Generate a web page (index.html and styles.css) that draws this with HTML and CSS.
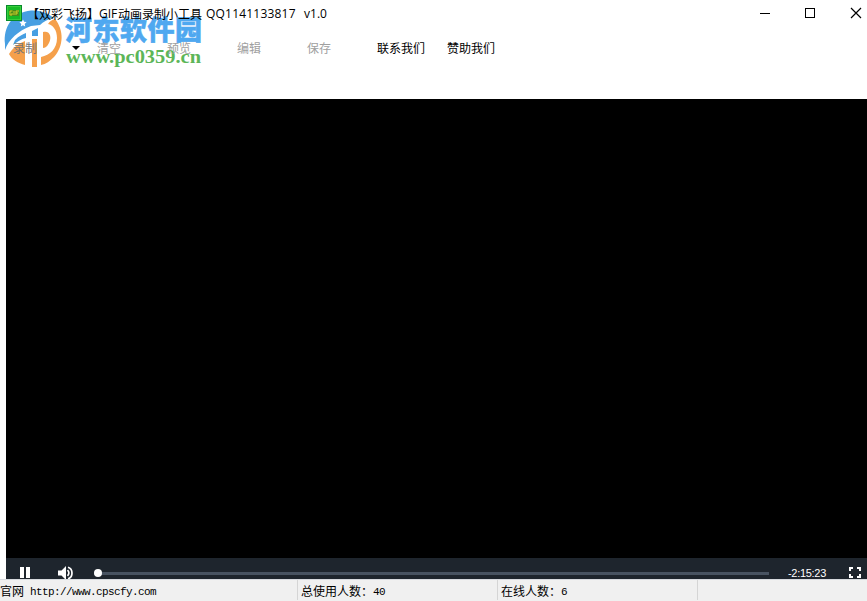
FILE: index.html
```
<!DOCTYPE html>
<html lang="zh-CN">
<head>
  <meta charset="UTF-8" />
  <title>GIF动画录制小工具</title>
  <link rel="stylesheet" href="styles.css">
</head>
<body>
  <div class="window">
    <div class="titlebar">
      <svg class="app-icon" width="16" height="16" viewBox="0 0 16 16">
        <rect width="16" height="16" fill="#078a2b"/>
        <rect x="1.5" y="1.5" width="13" height="13" fill="#18bb27" stroke="#39ce3c"/>
        <rect x="3" y="5" width="10" height="6" fill="#498b1b"/>
        <path d="M6.500 6H4v4h2V8M8 6v4M10 10V6h3M10 8h2" fill="none" stroke="#ddd52a" stroke-width=".9"/>
      </svg>
      <div class="title"><span>【双彩飞扬】</span><span class="gif">GIF</span><span>动画录制小工具</span><span class="qq">QQ1141133817</span><span class="version">v1.0</span></div>
      <svg class="controls" width="127" height="28" viewBox="0 0 127 28" fill="none" stroke="#000">
        <path d="M20 13.5h10"/>
        <rect x="65.5" y="8.5" width="9" height="9"/>
        <path d="M111 8l10 10M121 8l-10 10" stroke-width="1.2"/>
      </svg>
    </div>

    <div class="toolbar">
      <span class="item record disabled">录制</span>
      <span class="arrow"></span>
      <span class="item clear disabled">清空</span>
      <span class="item disabled">预览</span>
      <span class="item disabled">编辑</span>
      <span class="item disabled">保存</span>
      <span class="item contact">联系我们</span>
      <span class="item">赞助我们</span>
    </div>

    <div class="player">
      <div class="video"></div>
      <div class="player-bar">
        <svg class="pause" width="12" height="12" viewBox="0 0 12 12" fill="#fff">
          <path d="M0 0h4v11H0zM6 0h4v11H6z"/>
        </svg>
        <svg class="volume" width="16" height="14" viewBox="0 0 16 14">
          <path d="M0 4.5h3.5L8 0v14L3.5 9.5H0z" fill="#fff"/>
          <path d="M9.5 4.2q2.8 2.8 0 5.6M10 1.2c5.3 1.6 5.3 10 0 11.6" fill="none" stroke="#fff" stroke-width="1.7"/>
        </svg>
        <div class="track"><span class="knob"></span></div>
        <span class="time">-2:15:23</span>
        <svg class="fullscreen" width="12" height="12" viewBox="0 0 12 12" fill="none" stroke="#fff" stroke-width="2">
          <path d="M1 4V1h3M8 1h3v3M11 7v3H8M4 10H1V7"/>
        </svg>
      </div>
    </div>

    <div class="statusbar">
      <div class="cell site">官网<span class="mono url">http://www.cpscfy.com</span></div>
      <div class="cell">总使用人数：<span class="mono">40</span></div>
      <div class="cell">在线人数：<span class="mono">6</span></div>
    </div>

    <svg class="watermark" width="210" height="75" viewBox="0 0 210 75">
      <path d="M5 44C3 27 13 12 31 10.500C40 10 48 13 54 18C48 19 43 22 40 25L31 26C18 31 9 39 5 50Z" fill="#479fe2"/>
      <path d="M55 19C64 30 64 46 54 57C50 61 46 64 41 65V57C50 55 57 49 57 38C57 30 53 25 48 24C50 21 52 20 55 19Z" fill="#f5a04b"/>
      <path d="M9 54C12 49 16 45 25 41V65C18 63 12 60 9 54Z" fill="#f5a04b"/>
      <path d="M32 39H37V67H32Z" fill="#f5a04b"/>
      <path d="M43 32C50 30 52 37 49 43C47 47 45 48 43 48Z" fill="#f5a04b"/>
      <path d="M15 40C19 36 23 34 26 33V38C21 39 17 42 13 45Z" fill="#479fe2"/>
      <path d="M32 31L38 28V36H32Z" fill="#479fe2"/>
      <path d="M23 19.500l1.100 2.300 2.500.3-1.900 1.800.5 2.500-2.200-1.200-2.200 1.200.5-2.500-1.900-1.800 2.500-.3z" fill="#fff"/>
      <text class="wm-name" x="65" y="40" textLength="137">河东软件园</text>
      <text class="wm-url" x="66" y="63" textLength="135" lengthAdjust="spacingAndGlyphs">www.pc0359.cn</text>
    </svg>
  </div>
</body>
</html>
```
FILE: styles.css
```
body {
  margin: 0;
  background-color: #fff;
  font-family: "Noto Sans CJK SC", sans-serif;
  font-size: 12px;
  color: #000;
}
.window {
  position: relative;
  z-index: 0;
  display: flex;
  flex-direction: column;
  width: 867px;
  height: 601px;
  overflow: hidden;
}
.titlebar {
  display: flex;
  height: 28px;
}
.app-icon {
  margin: 5px 0 0 6px;
}
.title {
  display: flex;
  flex: 1;
  margin-left: 5px;
  line-height: 27px;
  white-space: nowrap;
}
.gif, .qq, .version {
  font-family: "Open Sans", sans-serif;
}
.gif {
  width: 19px;
}
.qq {
  width: 90px;
  margin-left: 4px;
  letter-spacing: 0.2px;
}
.version {
  margin-left: 8px;
}
.toolbar {
  display: flex;
  align-items: center;
  height: 40px;
  padding: 0 0 31px 13px;
}
.item {
  margin-right: 46px;
  line-height: 18px;
}
.disabled {
  color: #a0a0a0;
}
.record {
  margin-right: 35px;
  color: #777;
}
.arrow {
  margin-right: 17px;
  border: 4px solid transparent;
  border-top-color: #000;
  border-bottom: 0;
}
.contact {
  margin-right: 22px;
}
.player {
  display: flex;
  flex-direction: column;
  height: 480px;
  margin-left: 6px;
}
.video {
  flex: 1;
  background-color: #000;
}
.player-bar {
  display: flex;
  align-items: center;
  box-sizing: border-box;
  height: 21px;
  padding: 9px 6px 0 14px;
  background-color: #1e252d;
  overflow: hidden;
}
.player-bar svg {
  flex: none;
}
.volume {
  margin: 0 0 0 26px;
}
.track {
  display: flex;
  align-items: center;
  width: 675px;
  height: 3px;
  margin: 0 0 0 20px;
  background-color: #485361;
}
.knob {
  width: 8px;
  height: 8px;
  border-radius: 50%;
  background-color: #fff;
}
.time {
  flex: 1;
  margin: 0 0 1px 19px;
  font: 11px/12px "Liberation Sans", sans-serif;
  letter-spacing: -0.3px;
  color: #fff;
}
.statusbar {
  display: flex;
  flex: 1;
  border-top: 1px solid #d7dade;
  background-color: #f0f0f0;
}
.cell {
  box-sizing: border-box;
  width: 200px;
  height: 20px;
  padding-left: 3px;
  border-right: 1px solid #d5d5d5;
  line-height: 22px;
  white-space: pre;
}
.site {
  width: 298px;
  padding-left: 0;
}
.mono {
  font-family: "Liberation Mono", monospace;
  font-size: 11px;
  letter-spacing: -0.6px;
  vertical-align: 1px;
  line-height: 1;
}
.url {
  margin-left: 6px;
}
/* sits behind the title and the toolbar labels */
.watermark {
  position: absolute;
  left: 0;
  top: 0;
  z-index: -1;
}
.wm-name {
  font-size: 27px;
  font-weight: 900;
  fill: #4fa8f0;
  stroke: #4fa8f0;
  stroke-width: 0.5px;
}
.wm-url {
  font-family: "Liberation Serif", serif;
  font-size: 19px;
  font-weight: 700;
  fill: #5cb658;
}
```
